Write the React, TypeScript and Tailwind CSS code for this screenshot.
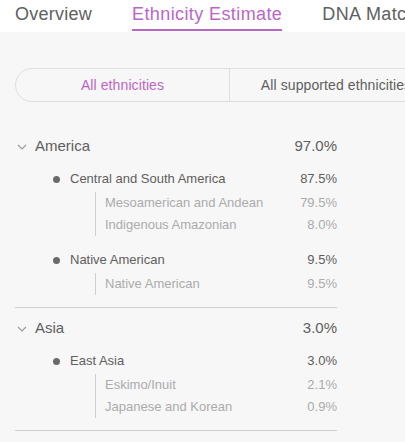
import React from "react";

type Sub = { name: string; pct: string };
type Region = { name: string; pct: string; subs: Sub[] };
type Group = { name: string; pct: string; regions: Region[] };

const groups: Group[] = [
  {
    name: "America",
    pct: "97.0%",
    regions: [
      {
        name: "Central and South America",
        pct: "87.5%",
        subs: [
          { name: "Mesoamerican and Andean", pct: "79.5%" },
          { name: "Indigenous Amazonian", pct: "8.0%" },
        ],
      },
      {
        name: "Native American",
        pct: "9.5%",
        subs: [{ name: "Native American", pct: "9.5%" }],
      },
    ],
  },
  {
    name: "Asia",
    pct: "3.0%",
    regions: [
      {
        name: "East Asia",
        pct: "3.0%",
        subs: [
          { name: "Eskimo/Inuit", pct: "2.1%" },
          { name: "Japanese and Korean", pct: "0.9%" },
        ],
      },
    ],
  },
];

function Chevron() {
  return (
    <svg width="10" height="6" viewBox="0 0 10 6" fill="none" className="mt-[2px]">
      <path d="M1 1l4 4 4-4" stroke="#9a9a9a" strokeWidth="1.1" />
    </svg>
  );
}

export default function App() {
  return (
    <div
      className="w-[405px] h-[442px] overflow-hidden bg-[#f7f7f7] text-[#5e5e5e]"
      style={{ fontFamily: '"Liberation Sans", Arial, sans-serif' }}
    >
      {/* tabs */}
      <div className="h-[32px] bg-white flex items-start pl-[15px] gap-[40px] whitespace-nowrap text-[18px] tracking-[0.4px]">
        <div className="h-[31px] pt-[4px] leading-[20px] text-[#606060] tracking-[0.25px]">Overview</div>
        <div className="h-[31px] pt-[4px] leading-[20px] text-[#bb66c6] border-b-2 border-[#bb66c6]">
          Ethnicity Estimate
        </div>
        <div className="h-[31px] pt-[4px] leading-[20px] text-[#606060]">DNA Matches</div>
      </div>

      {/* segment control */}
      <div className="mt-[36px] ml-[15px] flex w-[428px] h-[34px] border border-[#dedede] rounded-l-[17px] text-[14px] whitespace-nowrap tracking-[0.1px]">
        <div className="w-[214px] flex items-center justify-center text-[#bb66c6] border-r border-[#dedede]">
          All ethnicities
        </div>
        <div className="flex-1 flex items-center justify-center text-[#5e5e5e]">
          All supported ethnicities
        </div>
      </div>

      {/* list */}
      <div className="mt-[24px] ml-[15px] w-[322px]">
        {groups.map((g) => (
          <div key={g.name} className="border-b border-[#cfcfcf] pb-[12px]">
            <div className="h-[40px] flex items-center pl-[2px] text-[15px]">
              <Chevron />
              <span className="ml-[8px] flex-1">{g.name}</span>
              <span>{g.pct}</span>
            </div>
            <div className="mt-px flex flex-col gap-[12px]">
              {g.regions.map((r) => (
                <div key={r.name}>
                  <div className="h-[24px] flex items-center text-[13px]">
                    <span className="ml-[38px] w-[7px] h-[7px] rounded-full bg-[#6a6a6a]" />
                    <span className="ml-[10px] flex-1">{r.name}</span>
                    <span>{r.pct}</span>
                  </div>
                  <div className="mt-px ml-[80px] border-l border-[#cfcfcf] pl-[9px] text-[13px] text-[#ababab]">
                    {r.subs.map((s) => (
                      <div key={s.name} className="h-[22px] flex items-center">
                        <span className="flex-1">{s.name}</span>
                        <span>{s.pct}</span>
                      </div>
                    ))}
                  </div>
                </div>
              ))}
            </div>
          </div>
        ))}
      </div>
    </div>
  );
}
